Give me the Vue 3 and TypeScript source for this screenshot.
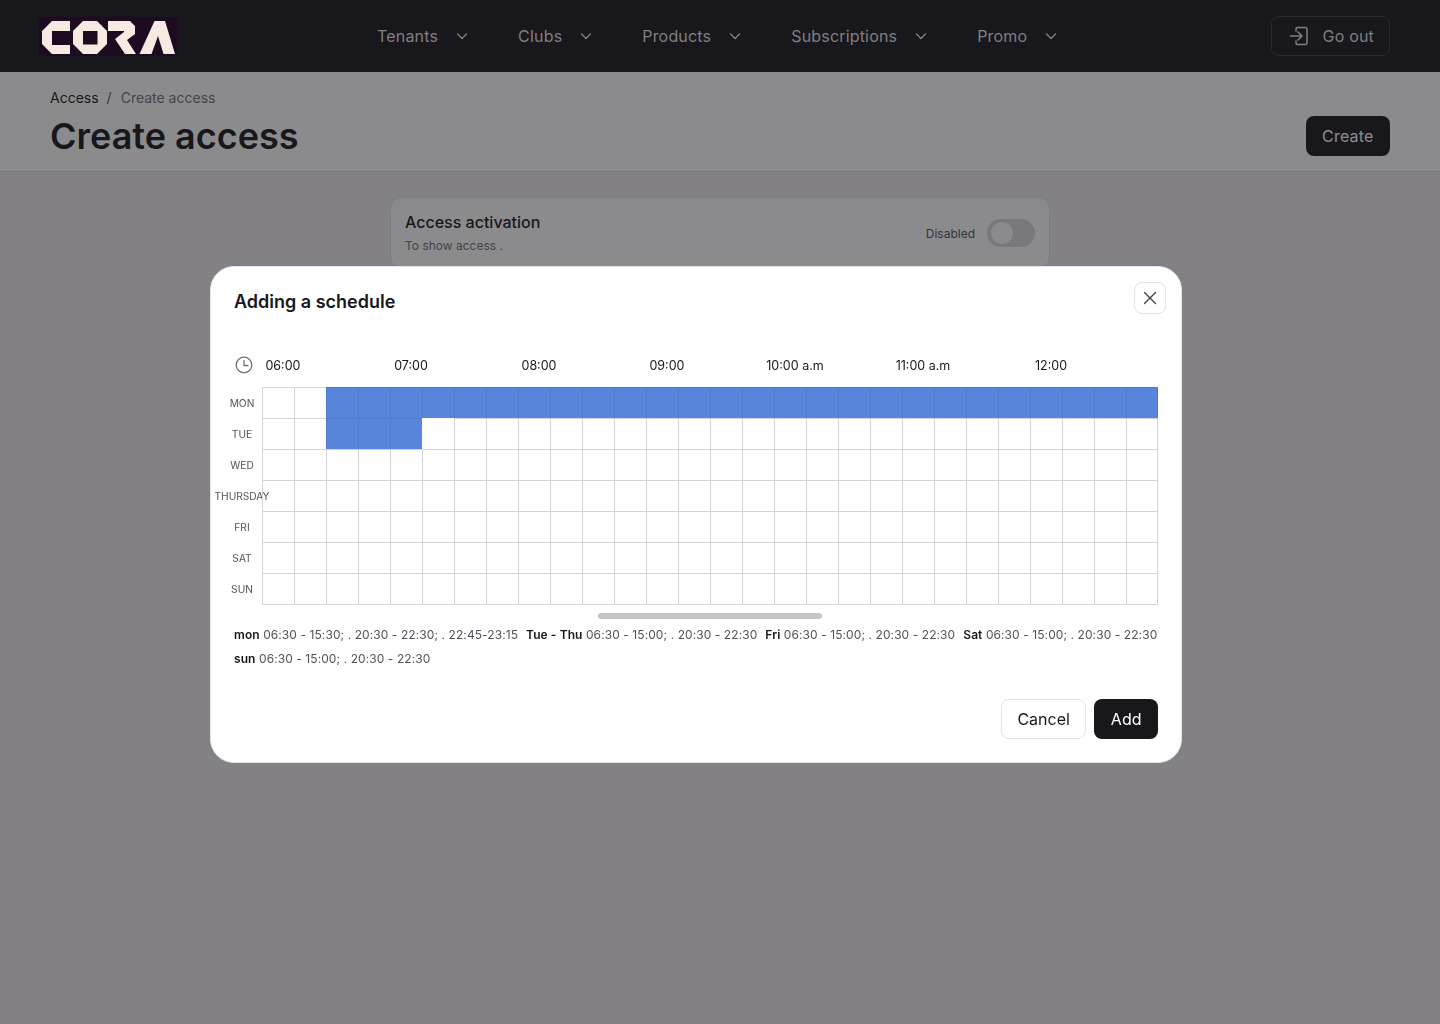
<template>
  <div class="page">
    <header class="topbar">
      <svg class="logo" viewBox="39 19 139 39" width="139" height="39" role="img" aria-label="CORA">
        <rect x="39" y="19" width="139" height="39" fill="#1f0b21" />
        <g fill="#f5ebe1">
          <polygon points="70,23 52,23 42,33 42,46 52,56 70,56 70,47 52,47 52,33 70,33" />
          <polygon points="83,23 97,23 107,33 107,46 97,56 83,56 73,46 73,33" />
          <polygon points="108,23 130,23 135,28 135,36 127,42 136,56 125,56 115,41 124,34 124,33 108,33" />
          <polygon points="139.500,56 154.500,23 165,23 175,56 163.500,56 158,38 151.500,56" />
        </g>
        <rect x="83" y="33" width="14.500" height="13.500" fill="#1f0b21" />
      </svg>
      <nav class="nav">
        <div v-for="item in navItems" :key="item" class="nav-item">
          <span>{{ item }}</span>
          <svg viewBox="0 0 16 16" width="16" height="16" fill="none" stroke="currentColor" stroke-width="1.4" stroke-linecap="round" stroke-linejoin="round">
            <path d="M3.5 6 8 10.5 12.5 6" />
          </svg>
        </div>
      </nav>
      <button class="go-out">
        <svg viewBox="0 0 20 20" width="20" height="20" fill="none" stroke="currentColor" stroke-width="1.5" stroke-linecap="round" stroke-linejoin="round">
          <path d="M7 5V3a1.500 1.500 0 0 1 1.500-1.500h8A1.500 1.500 0 0 1 18 3v14a1.500 1.500 0 0 1-1.500 1.500h-8A1.500 1.500 0 0 1 7 17v-2" />
          <path d="M1.500 10H13M9 6l4 4-4 4" />
        </svg>
        <span>Go out</span>
      </button>
    </header>

    <section class="page-head">
      <div>
        <div class="crumbs">
          <span class="crumb-link">Access</span>
          <span class="crumb-sep">/</span>
          <span>Create access</span>
        </div>
        <h1>Create access</h1>
      </div>
      <button class="create">Create</button>
    </section>

    <section class="card">
      <div class="card-text">
        <div class="card-title">Access activation</div>
        <div class="card-sub">To show access .</div>
      </div>
      <div class="toggle-wrap">
        <span>Disabled</span>
        <div class="toggle"><div class="knob"></div></div>
      </div>
    </section>

    <div class="overlay">
      <div class="modal">
        <button class="close">
          <svg viewBox="0 0 16 16" width="16" height="16" fill="none" stroke="#3f3f46" stroke-width="1.3" stroke-linecap="round">
            <path d="M2.500 2.500l11 11M13.500 2.500l-11 11" />
          </svg>
        </button>
        <h2>Adding a schedule</h2>

        <div class="times">
          <svg class="clock" viewBox="0 0 18 18" width="18" height="18" fill="none" stroke="#71717a" stroke-width="1.300" stroke-linecap="round" stroke-linejoin="round">
            <circle cx="9" cy="9" r="7.800" />
            <path d="M9 4.500V9.500H13" />
          </svg>
          <div v-for="t in times" :key="t" class="time">{{ t }}</div>
        </div>

        <div class="grid">
          <div v-for="(day, rowIndex) in days" :key="day" class="row">
            <div class="day">{{ day }}</div>
            <div
              v-for="col in columnCount"
              :key="col"
              class="cell"
              :class="cellClass(rowIndex, col - 1)"
            ></div>
          </div>
        </div>

        <div class="scroll"><div class="thumb"></div></div>

        <div class="summary">
          <div v-for="s in summary" :key="s.label" class="summary-item">
            <b>{{ s.label }}</b> {{ s.value }}
          </div>
        </div>

        <div class="actions">
          <button class="btn cancel">Cancel</button>
          <button class="btn add">Add</button>
        </div>
      </div>
    </div>
  </div>
</template>

<script setup lang="ts">
const navItems = ["Tenants", "Clubs", "Products", "Subscriptions", "Promo"];
const times = ["06:00", "07:00", "08:00", "09:00", "10:00 a.m", "11:00 a.m", "12:00"];
const days = ["MON", "TUE", "WED", "THURSDAY", "FRI", "SAT", "SUN"];
const columnCount = 28;

const summary = [
  { label: "mon", value: "06:30 - 15:30; . 20:30 - 22:30; . 22:45-23:15" },
  { label: "Tue - Thu", value: "06:30 - 15:00; . 20:30 - 22:30" },
  { label: "Fri", value: "06:30 - 15:00; . 20:30 - 22:30" },
  { label: "Sat", value: "06:30 - 15:00; . 20:30 - 22:30" },
  { label: "sun", value: "06:30 - 15:00; . 20:30 - 22:30" },
];

function cellClass(row: number, col: number) {
  if (row === 0 && col >= 2) return "filled";
  if (row === 1 && col >= 2 && col <= 4) return "filled";
  if (row === 1 && col === 5) return "cursor";
  return "";
}
</script>

<style scoped>
.page {
  min-height: 1024px;
  background: #eeebf0;
  font-family: Inter, "Liberation Sans", sans-serif;
  color: #18171c;
}

button {
  font-family: inherit;
  cursor: pointer;
}

.topbar {
  position: relative;
  z-index: 2;
  height: 72px;
  box-sizing: border-box;
  padding: 0 50px 0 39px;
  display: flex;
  align-items: center;
  background: #18171c;
  color: #807f83;
  font-size: 16px;
  letter-spacing: 0.18px;
}

.logo {
  display: block;
  flex-shrink: 0;
}

.nav {
  margin-left: 199px;
  display: flex;
  gap: 48px;
}

.nav-item {
  display: flex;
  align-items: center;
  gap: 16px;
}

.go-out {
  margin-left: auto;
  height: 40px;
  box-sizing: border-box;
  padding: 0 15px 0 17px;
  display: flex;
  align-items: center;
  gap: 14px;
  background: transparent;
  border: 1px solid #29282d;
  border-radius: 8px;
  color: #807f83;
  font-size: 16px;
  letter-spacing: 0.18px;
}

.page-head {
  height: 100px;
  box-sizing: border-box;
  padding: 16px 50px 0;
  display: flex;
  justify-content: space-between;
  background: #ffffff;
  border-bottom: 1px solid #e0e0e2;
}

.crumbs {
  display: flex;
  gap: 8px;
  font-size: 14px;
  line-height: 20px;
  color: #6f6f76;
}

.crumb-link {
  color: #18171c;
}

.crumb-sep {
  margin-right: 1px;
  color: #52525b;
}

h1 {
  margin: 6px 0 0;
  font-size: 36px;
  line-height: 44px;
  font-weight: 600;
  color: #18171c;
}

.create {
  align-self: flex-start;
  margin-top: 28px;
  height: 40px;
  padding: 0 16.500px;
  border: none;
  border-radius: 8px;
  background: #18171c;
  color: #ffffff;
  font-size: 16px;
  letter-spacing: 0.18px;
}

.card {
  width: 660px;
  height: 72px;
  box-sizing: border-box;
  margin: 25px auto 0;
  padding: 0 14px;
  display: flex;
  justify-content: space-between;
  align-items: center;
  background: #ffffff;
  border: 1px solid #e0e0e3;
  border-radius: 12px;
}

.card-text {
  margin-top: -2px;
}

.card-title {
  font-size: 16px;
  line-height: 24px;
  font-weight: 500;
}

.card-sub {
  margin-top: 4px;
  font-size: 12px;
  line-height: 16px;
  color: #6f6f76;
}

.toggle-wrap {
  display: flex;
  align-items: center;
  gap: 12px;
  font-size: 12px;
  color: #52525b;
}

.toggle {
  width: 48px;
  height: 28px;
  box-sizing: border-box;
  padding: 3px 4px;
  border-radius: 14px;
  background: #d9d9de;
}

.knob {
  width: 22px;
  height: 22px;
  border-radius: 50%;
  background: #ffffff;
}

.overlay {
  position: fixed;
  inset: 0;
  z-index: 1;
  background: rgba(24, 23, 28, 0.5);
}

.modal {
  position: relative;
  width: 972px;
  height: 497px;
  box-sizing: border-box;
  margin: 266px 0 0 210px;
  padding: 22px 23px 23px;
  background: #ffffff;
  border: 1px solid #e4e4e7;
  border-radius: 24px;
}

.close {
  position: absolute;
  top: 15px;
  right: 15px;
  width: 32px;
  height: 32px;
  padding: 0;
  display: flex;
  align-items: center;
  justify-content: center;
  background: #ffffff;
  border: 1px solid #e4e4e7;
  border-radius: 8px;
}

h2 {
  margin: 0;
  font-size: 18px;
  line-height: 26px;
  font-weight: 600;
  color: #18171c;
}

.times {
  margin-top: 40px;
  height: 20px;
  display: flex;
  align-items: center;
  font-size: 12.500px;
  color: #18171c;
}

.clock {
  flex-shrink: 0;
  margin: 0 -34px 0 1px;
}

.time {
  flex: 0 0 128px;
  text-align: center;
}

.grid {
  margin: 12px 0 0 -12px;
  width: 936px;
}

.row {
  display: flex;
  height: 31px;
}

.day {
  flex: 0 0 40px;
  min-width: 0;
  display: flex;
  align-items: center;
  justify-content: center;
  white-space: nowrap;
  font-size: 10.200px;
  color: #52525b;
}

.cell {
  flex: 0 0 32px;
  box-sizing: border-box;
  border-left: 1px solid #d4d4d8;
  border-top: 1px solid #d4d4d8;
}

.cell:last-child {
  border-right: 1px solid #d4d4d8;
}

.row:last-child .cell {
  height: 32px;
  border-bottom: 1px solid #d4d4d8;
}

.cell.filled {
  background: #5785db;
  border-color: #4f7bce;
}

.cell.cursor {
  border-top-color: #ffffff;
  border-left-color: #ffffff;
}

.scroll {
  margin: 9px 0 0 28px;
  width: 896px;
  display: flex;
  justify-content: center;
}

.thumb {
  width: 224px;
  height: 6px;
  border-radius: 3px;
  background: #c4c4c8;
}

.summary {
  margin-top: 4px;
  display: flex;
  flex-wrap: wrap;
  gap: 0 8px;
  font-size: 12px;
  line-height: 24px;
  letter-spacing: 0.08px;
  color: #52525b;
}

.summary b {
  font-weight: 600;
  color: #18171c;
}

.actions {
  margin-top: 28px;
  display: flex;
  justify-content: flex-end;
  gap: 8px;
}

.btn {
  height: 40px;
  border-radius: 8px;
  font-size: 16px;
}

.cancel {
  padding: 0 15.500px;
  background: #ffffff;
  border: 1px solid #e4e4e7;
  color: #18171c;
}

.add {
  padding: 0 16.500px;
  background: #18171c;
  border: none;
  color: #ffffff;
}
</style>
